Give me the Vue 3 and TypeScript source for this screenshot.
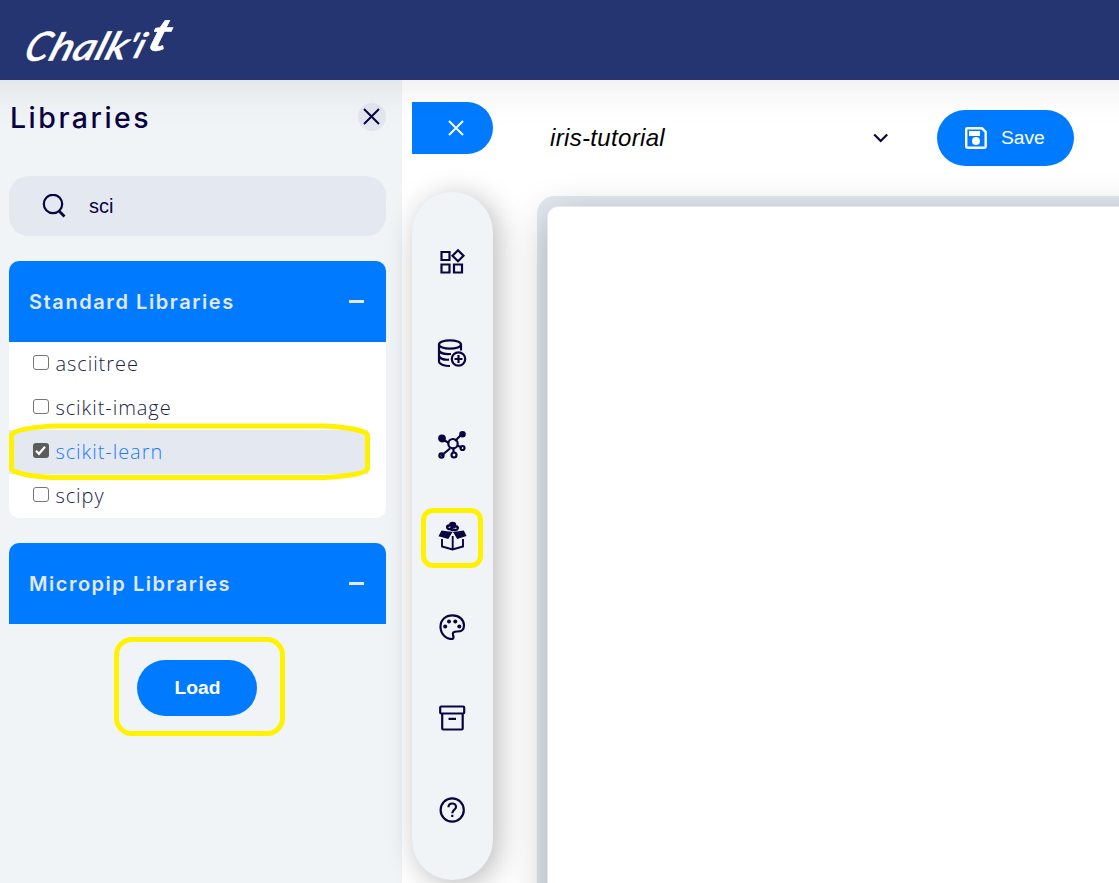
<script setup lang="ts">
import { ref } from 'vue'

interface Library {
  name: string
  loaded: boolean
}

const query = ref('sci')
const standard = ref<Library[]>([
  { name: 'asciitree', loaded: false },
  { name: 'scikit-image', loaded: false },
  { name: 'scikit-learn', loaded: true },
  { name: 'scipy', loaded: false },
])
</script>

<template>
  <div class="app">
    <header class="topbar">
      <svg class="logo" width="170" height="60" viewBox="0 0 170 60" role="img" aria-label="Chalk'it">
        <g fill="#fff" stroke="#fff" stroke-width=".5" font-family="Lato, sans-serif" font-style="italic" transform="translate(7 51) rotate(-1) skewX(-20)">
          <text font-size="40" font-weight="500" textLength="24" lengthAdjust="spacingAndGlyphs">C</text>
          <text x="25" font-size="38" font-weight="500" textLength="77" lengthAdjust="spacingAndGlyphs">halk</text>
          <text x="102" y="-1" font-size="35" font-weight="500" textLength="17" lengthAdjust="spacingAndGlyphs">'i</text>
          <text x="121" y="-8" font-size="45" font-weight="700" textLength="20" lengthAdjust="spacingAndGlyphs">t</text>
        </g>
      </svg>
    </header>

    <div class="body">
      <aside class="sidebar">
        <div class="heading">
          <h1>Libraries</h1>
          <button class="close" aria-label="Close">
            <svg width="28" height="28" viewBox="0 0 28 28"><path d="M6 6l15 15M21 6l-15 15" stroke="#0a0441" stroke-width="2" /></svg>
          </button>
        </div>

        <label class="search">
          <svg width="24" height="24" viewBox="0 0 24 24" fill="none" stroke="#0a0441" stroke-width="2.2"><circle cx="11" cy="10" r="9.200" /><path d="M17 17l5.500 5.500" stroke-width="2.8" /></svg>
          <input v-model="query" type="text" />
        </label>

        <section class="group">
          <div class="group-head"><span class="std">Standard Libraries</span><i class="minus"></i></div>
          <ul>
            <li v-for="lib in standard" :key="lib.name" :class="{ on: lib.loaded }">
              <span class="box">
                <svg v-if="lib.loaded" width="15" height="15" viewBox="0 0 15 15"><path d="M3 7.800l3 3 6-7" fill="none" stroke="#fff" stroke-width="2.2" /></svg>
              </span>
              <span class="name">{{ lib.name }}</span>
              <span v-if="lib.loaded" class="mark row-mark">
                <svg width="362" height="57" viewBox="0 0 362 57"><path d="M2.500 12C6 6 26 4 44 3H316C336 4 356 7 358.500 12V46C356 51 336 53.500 316 54.500H44C26 53.500 6 51 2.500 46Z" /></svg>
              </span>
            </li>
          </ul>
        </section>

        <section class="group">
          <div class="group-head"><span class="mic">Micropip Libraries</span><i class="minus"></i></div>
        </section>

        <div class="load-wrap">
          <button class="load">Load</button>
          <span class="mark load-mark"></span>
        </div>
      </aside>

      <main class="main">
        <div class="rail">
          <button class="toggle" aria-label="Collapse">
            <svg width="16" height="16" viewBox="0 0 16 16"><path d="M1 1l14 14M15 1L1 15" stroke="#fff" stroke-width="1.8" /></svg>
          </button>
          <nav>
            <a><svg viewBox="0 0 28 28"><path d="M3.500 4h8v8h-8zM3.500 16.500h8v8h-8zM16 16.500h8v8h-8zM20 2.300l5.500 5.500-5.500 5.500-5.500-5.500z" /></svg></a>
            <a><svg viewBox="0 0 28 28"><ellipse cx="12" cy="5.500" rx="11" ry="4.200" /><path d="M1 5.500v17c0 2.500 5 4.500 11 4.500M1 11.500c1 2.500 6 4 12 3.500M1 17c1 2.500 5 4 10 3.700M23 5.500v6" /><circle cx="20.500" cy="20" r="6.700" /><path d="M20.500 16v8M16.500 20h8" /></svg></a>
            <a><svg viewBox="0 0 28 28"><path d="M4 8l7 4M23 4l-6 6M12 17.500L3 25M15.500 17.500v5M19 14.500l5 2" /><circle cx="15" cy="12.700" r="4.700" /><circle cx="4" cy="7.500" r="2.800" fill="#0a0441" /><circle cx="24.500" cy="3.200" r="2.200" fill="#0a0441" /><circle cx="3.500" cy="24.500" r="2.100" /><circle cx="16" cy="24" r="2.500" /><circle cx="24.500" cy="17" r="2" /></svg></a>
            <a><svg viewBox="0 0 28 28"><path d="M4 17v7.500L14.500 27.500l10.500-3V17M14.700 14v13" stroke-width="1.900" /><path d="M3.500 8.500l11 1.500-4.200 7L.500 14.200zM25.800 8.500L15 10l4.200 7 9.300-3z" fill="#0a0441" stroke="none" /><path d="M12.500 7H10.500Q9.200 6.800 9.200 5.200 9.200 3.600 11 3.600h4.500M15.500 4.600h3Q20 4.600 19.700 6.500 19.200 8.200 17 8H12.500M12.200 3q0-2 2.400-2T17 3 15 5.300 12.700 7" stroke-width="2.500" /></svg><span class="mark nav-mark"></span></a>
            <a><svg viewBox="0 0 28 28"><path d="M14.500 25C7.500 25 2.500 19.500 2.500 12.700S7.500 1.300 14.500 1.300 26 6 26 11.500 22.500 17.500 19 17.500q-5 0-4 3.500 1.200 3-.5 4z" /><g fill="#0a0441" stroke="none"><circle cx="7.200" cy="12.500" r="2" /><circle cx="11" cy="7.500" r="2" /><circle cx="17.300" cy="7.500" r="2" /><circle cx="21.300" cy="12.500" r="2" /></g></svg></a>
            <a><svg viewBox="0 0 28 28"><path d="M3.200 1.500h22q1 0 1 1v5q0 1-1 1h-22q-1 0-1-1v-5q0-1 1-1zM4.200 8.500v15q0 1 1 1h18.500q1 0 1-1v-15M10.500 13.800h7.500" /></svg></a>
            <a><svg viewBox="0 0 28 28"><circle cx="14.200" cy="14" r="11.600" /><path d="M10.500 11.200c0-2.300 1.600-3.700 3.700-3.700s3.800 1.400 3.800 3.400c0 2.600-3.700 3.300-3.700 6.300M14.300 18.700v2.400" /></svg></a>
          </nav>
        </div>

        <div class="workspace">
          <div class="toolbar">
            <div class="project">
              <span>iris-tutorial</span>
              <svg width="16" height="11" viewBox="0 0 16 11"><path d="M1.200 1.500l6.500 6.500L14.200 1.500" fill="none" stroke="#0a0441" stroke-width="2.200" /></svg>
            </div>
            <button class="save">
              <svg width="22" height="22" viewBox="0 0 22 22"><path d="M2.200 1.300H17L20.700 5v14.500q0 1.200-1.200 1.200H2.400q-1.200 0-1.200-1.200V2.500q0-1.200 1-1.200z" fill="none" stroke="#fff" stroke-width="2.400" /><path d="M4 4h11v5H4z" fill="#fff" /><circle cx="11" cy="14" r="4" fill="#fff" /></svg>
              <span>Save</span>
            </button>
          </div>
          <div class="frame"><div class="canvas"></div></div>
        </div>
      </main>
    </div>
  </div>
</template>

<style>
body {
  margin: 0;
  overflow: hidden;
}
</style>

<style scoped>
.app {
  width: 100vw;
  height: 100vh;
  display: flex;
  flex-direction: column;
  overflow: hidden;
  background: #fff;
  color: #0a0441;
  font-family: "Liberation Sans", Arial, sans-serif;
}
* { box-sizing: border-box; }
button { border: 0; padding: 0; font-family: inherit; }
.topbar {
  position: relative;
  z-index: 3;
  flex: none;
  height: 80px;
  margin: 0 -50px;
  padding: 10px 65px;
  background: #253572;
  box-shadow: 0 0 50px rgba(0, 0, 0, 0.1);
}
.logo { display: block; overflow: visible; }
.body { flex: 1; min-height: 0; display: flex; }
.sidebar {
  width: 402px;
  flex: none;
  padding: 16px 16px 0 9px;
  background: #f0f4f7;
}
.heading {
  height: 43px;
  display: flex;
  align-items: center;
  justify-content: space-between;
}
h1 {
  margin: 0 0 0 1px;
  font: 500 28.5px/43px Inter, sans-serif;
  letter-spacing: 2.5px;
}
.close {
  width: 28px;
  height: 28px;
  margin-top: -1px;
  border-radius: 50%;
  background: #e2e6ee;
}
.close svg { display: block; }
.search {
  display: flex;
  align-items: center;
  height: 60px;
  margin-top: 37px;
  padding-left: 33px;
  gap: 23px;
  border-radius: 20px;
  background: #e4e8f0;
}
.search input {
  width: 240px;
  border: 0;
  padding: 0;
  outline: 0;
  background: none;
  color: #0a0441;
  font: 20px "Liberation Sans", sans-serif;
}
.group { margin-top: 25px; }
.group-head {
  height: 81px;
  padding: 0 22px 0 20px;
  display: flex;
  align-items: center;
  justify-content: space-between;
  border-radius: 10px 10px 0 0;
  background: #007bff;
  color: #e4e8f0;
  font: 600 20px Inter, sans-serif;
}
.std { letter-spacing: 1.58px; }
.mic { letter-spacing: 1.52px; }
.minus { width: 15px; height: 3px; background: #e4e8f0; }
ul {
  margin: 0;
  padding: 0;
  list-style: none;
  background: #fff;
  border-radius: 0 0 10px 10px;
}
li {
  position: relative;
  height: 44px;
  padding-left: 24px;
  display: flex;
  align-items: center;
  color: #201d48;
}
li.on { width: 359px; background: #e4e8f0; color: #1a7efb; }
.box {
  width: 16px;
  height: 15px;
  margin-top: -3px;
  border: 1.5px solid #767676;
  border-radius: 3px;
  background: #fff;
}
.on .box { border: 0; background: #5c5c5c; }
.box svg { display: block; }
.name {
  margin: -2px 0 0 6.4px;
  font: 300 20px "Open Sans", sans-serif;
  letter-spacing: 0.95px;
}
.mark { position: absolute; z-index: 2; }
.row-mark { left: 0; top: -7px; }
.row-mark svg { display: block; }
.row-mark path { fill: none; stroke: #fff200; stroke-width: 5; }
.load-wrap {
  position: relative;
  width: 120px;
  margin: 36px auto 0 128px;
}
.load {
  display: block;
  width: 120px;
  height: 56px;
  padding: 0 0 1px 1px;
  border-radius: 28px;
  background: #007bff;
  color: #fff;
  font-weight: 700;
  font-size: 19.2px;
}
.load-mark {
  left: -23px;
  top: -23px;
  width: 171px;
  height: 99px;
  border: 5px solid #fff200;
  border-radius: 18px;
}
.main { flex: 1; min-width: 0; display: flex; padding-left: 10px; }
.rail { width: 81px; flex: none; padding-top: 22px; }
.toggle {
  display: flex;
  align-items: center;
  justify-content: center;
  width: 81px;
  height: 52px;
  padding-left: 7px;
  border-radius: 0 26px 26px 0;
  background: #007bff;
}
nav {
  position: relative;
  z-index: 1;
  height: 688px;
  margin-top: 38px;
  padding: 56px 2px 0 0;
  display: flex;
  flex-direction: column;
  align-items: center;
  gap: 63.4px;
  border-radius: 41px;
  background: #f0f4f7;
  box-shadow: 5px 5px 30px rgba(0, 0, 0, 0.28);
}
nav a { position: relative; width: 28px; height: 28px; }
nav svg {
  display: block;
  overflow: visible;
  fill: none;
  stroke: #0a0441;
  stroke-width: 2.2;
}
.nav-mark {
  left: -17px;
  top: -14px;
  width: 62px;
  height: 60px;
  border: 5px solid #fff200;
  border-radius: 12px;
}
.workspace {
  flex: 1;
  min-width: 0;
  padding: 30px 0 0 44px;
  display: flex;
  flex-direction: column;
}
.toolbar { height: 56px; display: flex; align-items: center; }
.project {
  width: 400px;
  padding: 0 48px 0 13px;
  display: flex;
  align-items: center;
  justify-content: space-between;
  color: #000;
  font-size: 24px;
  font-style: italic;
  letter-spacing: 0.33px;
}
.save {
  width: 137px;
  height: 56px;
  padding-left: 28px;
  display: flex;
  align-items: center;
  gap: 14px;
  border-radius: 28px;
  background: #007bff;
  color: #fff;
  font-size: 19.2px;
}
.frame {
  flex: 1;
  margin: 30px -60px -60px 0;
  padding: 10px;
  border-radius: 18px;
  background: #e4e8f0;
  display: flex;
}
.canvas {
  flex: 1;
  border: 1px solid #e4e8f0;
  border-radius: 11px;
  background: #fff;
  box-shadow: 0 10px 40px rgba(0, 0, 0, 0.26);
}
</style>
